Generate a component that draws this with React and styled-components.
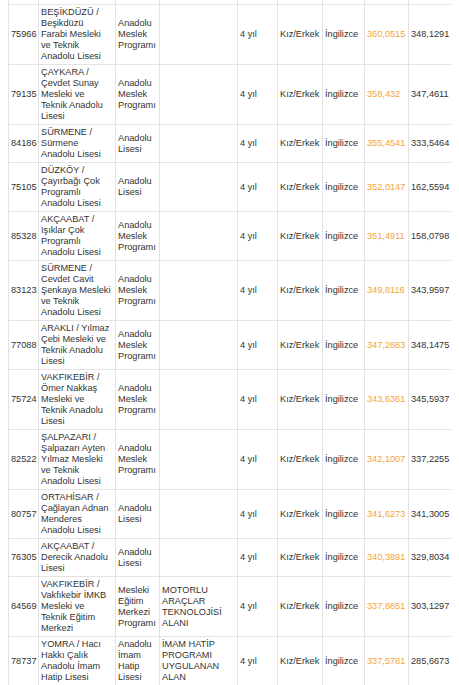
import React from 'react'
import styled, { createGlobalStyle } from 'styled-components'

const Global = createGlobalStyle`
    body{
        margin: 0 8px;
        background: #fff;
        font-family: "Liberation Sans", Arial, sans-serif;
    }
`
const Table = styled.div`
    display: grid;
    grid-template-columns: 30px 77px 44px 78px 40px 45px 42px 44px 44px;
    width: max-content;
    border-left: 1px solid #e3e3e3;
    font-size: 9.2px;
    line-height: 11px;
    color: #333;
`
const Cell = styled.div`
    display: flex;
    align-items: center;
    padding: 2px 1px 2px 2px;
    border-right: 1px solid #e3e3e3;
    border-bottom: 1px solid #e3e3e3;
    white-space: nowrap;
    overflow: hidden;
    color: ${p => p.$orange ? '#f3a43c' : 'inherit'};
`
const Spacer = styled.div`
    height: 4px;
    border-right: 1px solid #e3e3e3;
    border-bottom: 1px solid #e3e3e3;
`

const rows = [
    ['75966', ['BEŞİKDÜZÜ /', 'Beşikdüzü', 'Farabi Mesleki', 've Teknik', 'Anadolu Lisesi'], ['Anadolu', 'Meslek', 'Programı'], [], '360,0515', '348,1291'],
    ['79135', ['ÇAYKARA /', 'Çevdet Sunay', 'Mesleki ve', 'Teknik Anadolu', 'Lisesi'], ['Anadolu', 'Meslek', 'Programı'], [], '358,432', '347,4611'],
    ['84186', ['SÜRMENE /', 'Sürmene', 'Anadolu Lisesi'], ['Anadolu', 'Lisesi'], [], '355,4541', '333,5464'],
    ['75105', ['DÜZKÖY /', 'Çayırbağı Çok', 'Programlı', 'Anadolu Lisesi'], ['Anadolu', 'Lisesi'], [], '352,0147', '162,5594'],
    ['85328', ['AKÇAABAT /', 'Işıklar Çok', 'Programlı', 'Anadolu Lisesi'], ['Anadolu', 'Meslek', 'Programı'], [], '351,4911', '158,0798'],
    ['83123', ['SÜRMENE /', 'Cevdet Cavit', 'Şenkaya Mesleki', 've Teknik', 'Anadolu Lisesi'], ['Anadolu', 'Meslek', 'Programı'], [], '349,8116', '343,9597'],
    ['77088', ['ARAKLI / Yılmaz', 'Çebi Mesleki ve', 'Teknik Anadolu', 'Lisesi'], ['Anadolu', 'Meslek', 'Programı'], [], '347,2683', '348,1475'],
    ['75724', ['VAKFIKEBİR /', 'Ömer Nakkaş', 'Mesleki ve', 'Teknik Anadolu', 'Lisesi'], ['Anadolu', 'Meslek', 'Programı'], [], '343,6361', '345,5937'],
    ['82522', ['ŞALPAZARI /', 'Şalpazarı Ayten', 'Yılmaz Mesleki', 've Teknik', 'Anadolu Lisesi'], ['Anadolu', 'Meslek', 'Programı'], [], '342,1007', '337,2255'],
    ['80757', ['ORTAHİSAR /', 'Çağlayan Adnan', 'Menderes', 'Anadolu Lisesi'], ['Anadolu', 'Lisesi'], [], '341,6273', '341,3005'],
    ['76305', ['AKÇAABAT /', 'Derecik Anadolu', 'Lisesi'], ['Anadolu', 'Lisesi'], [], '340,3891', '329,8034'],
    ['84569', ['VAKFIKEBİR /', 'Vakfıkebir İMKB', 'Mesleki ve', 'Teknik Eğitim', 'Merkezi'], ['Mesleki', 'Eğitim', 'Merkezi', 'Programı'], ['MOTORLU', 'ARAÇLAR', 'TEKNOLOJİSİ', 'ALANI'], '337,8851', '303,1297'],
    ['78737', ['YOMRA / Hacı', 'Hakkı Çalık', 'Anadolu İmam', 'Hatip Lisesi'], ['Anadolu', 'İmam', 'Hatip', 'Lisesi'], ['İMAM HATİP', 'PROGRAMI', 'UYGULANAN', 'ALAN'], '337,5781', '285,6673'],
]

const Lines = ({ lines }) => (
    <div>
        {lines.map((l, i) => <React.Fragment key={i}>{i > 0 && <br />}{l}</React.Fragment>)}
    </div>
)

const App = () => {
    return (
        <>
            <Global />
            <Table>
                {Array.from({ length: 9 }).map((_, i) => <Spacer key={'s' + i} />)}
                {rows.map(([code, school, type, area, top, base]) => (
                    <React.Fragment key={code}>
                        <Cell>{code}</Cell>
                        <Cell><Lines lines={school} /></Cell>
                        <Cell><Lines lines={type} /></Cell>
                        <Cell><Lines lines={area} /></Cell>
                        <Cell>4 yıl</Cell>
                        <Cell>Kız/Erkek</Cell>
                        <Cell>İngilizce</Cell>
                        <Cell $orange>{top}</Cell>
                        <Cell>{base}</Cell>
                    </React.Fragment>
                ))}
            </Table>
        </>
    )
}

export default App
